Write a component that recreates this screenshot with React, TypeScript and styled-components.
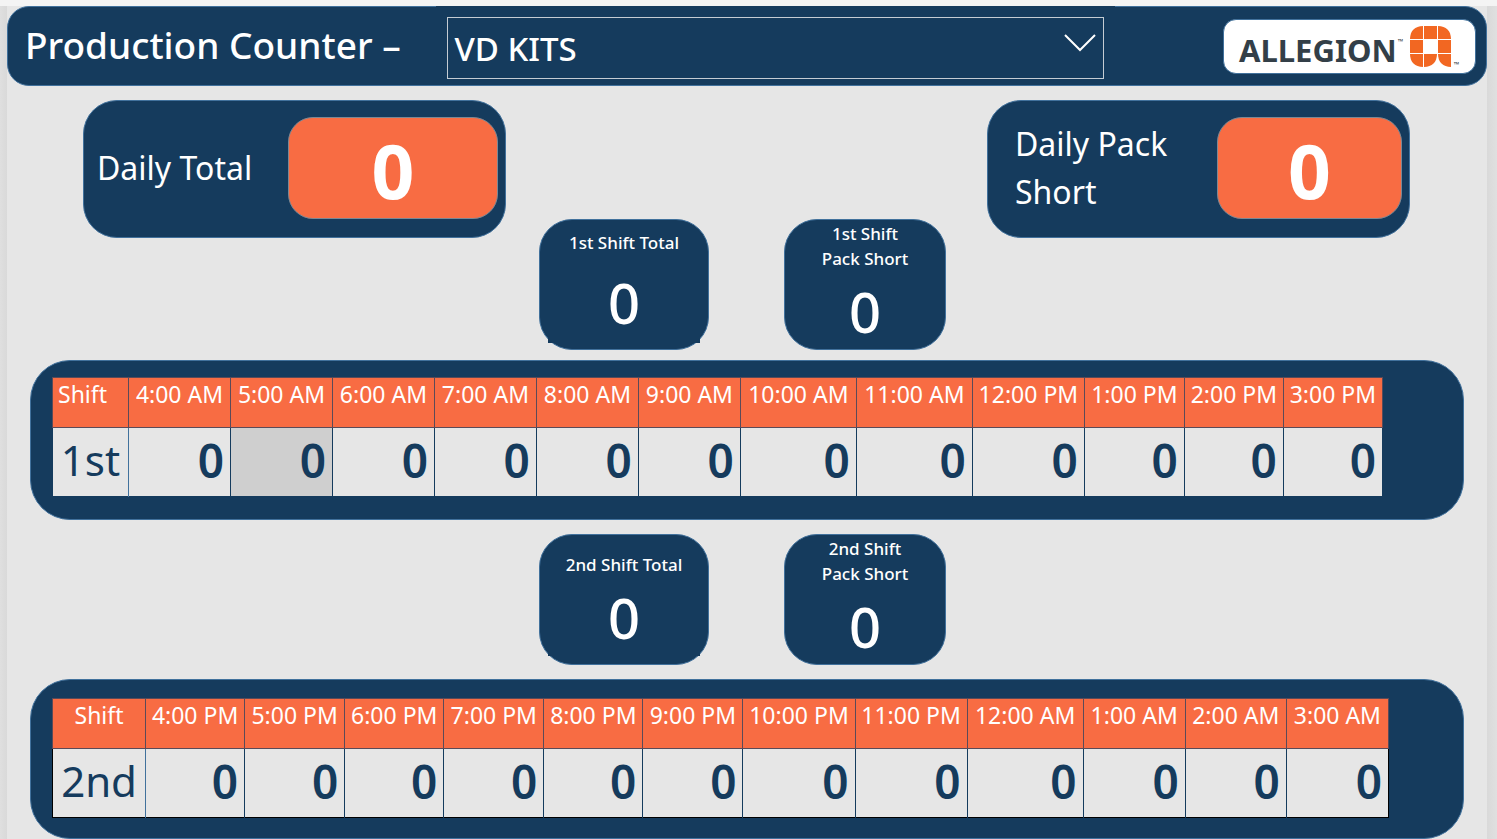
import React from "react";
import styled, { createGlobalStyle } from "styled-components";

const navy = "#153b5d";
const edge = "#41719c";
const orange = "#f86c43";
const canvas = "#e6e6e6";

const GlobalStyle = createGlobalStyle`
  * { box-sizing: border-box; }
  body {
    margin: 0;
    background: ${canvas};
    font-family: "Noto Sans", "Open Sans", sans-serif;
    color: #fff;
  }
`;

const Page = styled.div`
  min-height: 100vh;
  border-top: 6px solid #f4f4f4;
  padding: 0 10px 0 7px;
  background: linear-gradient(to right, #dfdfdf, #d9d9d9 7px, ${canvas} 7px, ${canvas} calc(100% - 10px), #d9d9d9 calc(100% - 10px), #e0e0e0);
`;

const Header = styled.header`
  display: grid;
  grid-template-columns: 429fr 679fr 372fr;
  height: 80px;
  background: ${navy};
  border: 1px solid ${edge};
  border-radius: 22px;
`;

const Title = styled.h1`
  margin: 0;
  padding-left: 17px;
  font-size: 37px;
  font-weight: 500;
  line-height: 76px;
  white-space: nowrap;
`;

const Slicer = styled.div`
  position: relative;
  margin-top: -1px;
  padding: 11px 11px 5px;
  background: ${navy};
`;

const LineSelect = styled.select`
  display: block;
  width: 100%;
  height: 62px;
  padding: 0 6px;
  appearance: none;
  border: 1px solid #c4ccd3;
  border-radius: 0;
  background: ${navy};
  color: #fff;
  font: 500 33px "Noto Sans", sans-serif;
`;

const Chevron = styled.svg`
  position: absolute;
  top: 28px;
  right: 19px;
  pointer-events: none;
`;

const Logo = styled.div`
  justify-self: end;
  display: flex;
  width: 253px;
  height: 55px;
  margin: 12px 10px 0 0;
  padding: 6px 0 0 15px;
  background: #fff;
  border: 1px solid ${edge};
  border-radius: 13px;
  color: #333f48;
`;

const Wordmark = styled.span`
  font-size: 31px;
  font-weight: 700;
  line-height: 48px;
`;

const Trademark = styled.span<{ $low?: boolean }>`
  align-self: ${(p) => (p.$low ? "flex-end" : "flex-start")};
  width: ${(p) => (p.$low ? "8px" : "13px")};
  padding: ${(p) => (p.$low ? "0 0 4px 2px" : "12px 0 0 1px")};
  font-size: 7px;
  line-height: 8px;
`;

const Summary = styled.section<{ $tall?: boolean }>`
  display: grid;
  grid-template-columns: 76fr 423fr 33fr 170fr 75fr 162fr 41fr 423fr 77fr;
  height: ${(p) => (p.$tall ? "250px" : "131px")};
  margin-top: 14px;
`;

const DailyCard = styled.div<{ $column: number; $inset: number }>`
  grid-column: ${(p) => p.$column};
  align-self: start;
  display: flex;
  align-items: center;
  justify-content: space-between;
  height: 138px;
  padding: 0 7px 2px ${(p) => p.$inset}px;
  background: ${navy};
  border: 1px solid ${edge};
  border-radius: 34px;
  font-size: 32px;
  line-height: 48px;
`;

const DailyValue = styled.output<{ $width: number }>`
  flex: none;
  width: ${(p) => p.$width}px;
  height: 102px;
  background: ${orange};
  border: 1px solid #7c8894;
  border-radius: 25px;
  font-size: 75px;
  font-weight: 700;
  line-height: 105px;
  text-align: center;
`;

const ShiftCard = styled.div<{ $column: number }>`
  grid-column: ${(p) => p.$column};
  align-self: end;
  display: flex;
  flex-direction: column;
  align-items: center;
  justify-content: space-between;
  height: 131px;
  padding: 0 8px;
  background: ${navy};
  border: 1px solid ${edge};
  border-radius: 33px;
  text-align: center;
`;

const ShiftLabel = styled.label<{ $top: number; $narrow?: boolean }>`
  width: ${(p) => (p.$narrow ? "100px" : "auto")};
  padding-top: ${(p) => p.$top}px;
  font-size: 17px;
  font-weight: 500;
  line-height: 25px;
  white-space: ${(p) => (p.$narrow ? "normal" : "nowrap")};
`;

const ShiftValue = styled.output<{ $foot?: number }>`
  width: 100%;
  height: ${(p) => (p.$foot ? 78 - p.$foot : 72)}px;
  margin-bottom: ${(p) => p.$foot ?? 0}px;
  background: ${(p) => (p.$foot ? navy : "transparent")};
  font-size: 56px;
  font-weight: 500;
  line-height: ${(p) => (p.$foot ? "62px" : "68px")};
`;

const Panel = styled.section<{ $gap: number; $top: number; $right: number }>`
  height: 160px;
  margin: ${(p) => p.$gap}px 23px 0;
  padding: ${(p) => p.$top}px ${(p) => p.$right}px 0 21px;
  background: ${navy};
  border: 1px solid ${edge};
  border-radius: 40px;
`;

const HourTable = styled.table<{ $outline: string }>`
  width: 100%;
  table-layout: fixed;
  border-collapse: collapse;
  border: 1px solid ${(p) => p.$outline};
`;

const Col = styled.col<{ $share: number }>`
  width: ${(p) => p.$share}%;
`;

const HourHead = styled.th<{ $start?: boolean }>`
  height: 50px;
  padding: ${(p) => (p.$start ? "0 0 0 5px" : "0")};
  background: ${orange};
  border: 1px solid #5b4a58;
  font-size: 23px;
  font-weight: 400;
  line-height: 32px;
  text-align: ${(p) => (p.$start ? "left" : "center")};
  vertical-align: top;
  white-space: nowrap;
`;

const ShiftName = styled.th`
  height: 69px;
  padding: 0 0 4px;
  background: ${canvas};
  border-right: 1px solid ${edge};
  color: ${navy};
  font-size: 42px;
  font-weight: 400;
  line-height: 60px;
  text-align: center;
`;

const HourValue = styled.td<{ $selected?: boolean }>`
  height: 69px;
  padding: 0 6px 4px 0;
  background: ${(p) => (p.$selected ? "#cfcfcf" : canvas)};
  border-left: 1px solid ${navy};
  color: ${navy};
  font-size: 46px;
  font-weight: 600;
  line-height: 60px;
  text-align: right;
`;

function AllegionMark() {
  return (
    <svg width="42" height="42" viewBox="0 0 42 42" fill="#f26722" aria-hidden="true">
      <path d="M13 0V13H0C0 5 5 0 13 0Z" />
      <path d="M14 0H27V13H14Z" />
      <path d="M28 0C36 0 41 5 41 13H28Z" />
      <path d="M0 14H13V27H0Z" />
      <path d="M28 14H41V27H28Z" />
      <path d="M0 28H13V41C5 41 0 36 0 28Z" />
      <path d="M14 28H27C27 36 22 41 14 41Z" />
      <path d="M28 28H41V41C33 41 28 36 28 28Z" />
    </svg>
  );
}

type ShiftTableProps = {
  shift: string;
  hours: string[];
  widths: number[];
  outline: string;
  selected?: number;
  startLabel?: boolean;
};

function ShiftTable({ shift, hours, widths, outline, selected, startLabel }: ShiftTableProps) {
  const total = widths.reduce((sum, w) => sum + w, 0);
  return (
    <HourTable $outline={outline}>
      <colgroup>
        {widths.map((w, i) => (
          <Col key={i} $share={(w / total) * 100} />
        ))}
      </colgroup>
      <thead>
        <tr>
          <HourHead scope="col" $start={startLabel}>Shift</HourHead>
          {hours.map((hour) => (
            <HourHead scope="col" key={hour}>{hour}</HourHead>
          ))}
        </tr>
      </thead>
      <tbody>
        <tr>
          <ShiftName scope="row">{shift}</ShiftName>
          {hours.map((hour, i) => (
            <HourValue key={hour} $selected={i === selected}>0</HourValue>
          ))}
        </tr>
      </tbody>
    </HourTable>
  );
}

const firstHours = ["4:00 AM", "5:00 AM", "6:00 AM", "7:00 AM", "8:00 AM", "9:00 AM", "10:00 AM", "11:00 AM", "12:00 PM", "1:00 PM", "2:00 PM", "3:00 PM"];
const secondHours = ["4:00 PM", "5:00 PM", "6:00 PM", "7:00 PM", "8:00 PM", "9:00 PM", "10:00 PM", "11:00 PM", "12:00 AM", "1:00 AM", "2:00 AM", "3:00 AM"];

export default function App() {
  return (
    <>
      <GlobalStyle />
      <Page>
        <Header>
          <Title>Production Counter –</Title>
          <Slicer>
            <LineSelect aria-label="Production line" defaultValue="VD KITS">
              <option>VD KITS</option>
            </LineSelect>
            <Chevron width="32" height="18" viewBox="0 0 32 18" fill="none" stroke="#fff" strokeWidth="2" aria-hidden="true">
              <path d="M1 1L16 16L31 1" />
            </Chevron>
          </Slicer>
          <Logo>
            <Wordmark>ALLEGION</Wordmark>
            <Trademark>™</Trademark>
            <AllegionMark />
            <Trademark $low>™</Trademark>
          </Logo>
        </Header>

        <main>
          <Summary $tall>
            <DailyCard $column={2} $inset={13}>
              <label htmlFor="daily-total">Daily Total</label>
              <DailyValue id="daily-total" $width={210}>0</DailyValue>
            </DailyCard>
            <ShiftCard $column={4}>
              <ShiftLabel htmlFor="first-total" $top={10}>1st Shift Total</ShiftLabel>
              <ShiftValue id="first-total" $foot={6}>0</ShiftValue>
            </ShiftCard>
            <ShiftCard $column={6}>
              <ShiftLabel htmlFor="first-short" $top={1} $narrow>1st Shift Pack Short</ShiftLabel>
              <ShiftValue id="first-short">0</ShiftValue>
            </ShiftCard>
            <DailyCard $column={8} $inset={27}>
              <label htmlFor="daily-short">Daily Pack Short</label>
              <DailyValue id="daily-short" $width={185}>0</DailyValue>
            </DailyCard>
          </Summary>

          <Panel $gap={10} $top={16} $right={80}>
            <ShiftTable
              shift="1st"
              hours={firstHours}
              widths={[76, 102, 102, 102, 102, 102, 102, 116, 116, 112, 100, 99, 99]}
              outline={navy}
              selected={1}
              startLabel
            />
          </Panel>

          <Summary>
            <ShiftCard $column={4}>
              <ShiftLabel htmlFor="second-total" $top={17}>2nd Shift Total</ShiftLabel>
              <ShiftValue id="second-total" $foot={8}>0</ShiftValue>
            </ShiftCard>
            <ShiftCard $column={6}>
              <ShiftLabel htmlFor="second-short" $top={1} $narrow>2nd Shift Pack Short</ShiftLabel>
              <ShiftValue id="second-short">0</ShiftValue>
            </ShiftCard>
          </Summary>

          <Panel $gap={14} $top={18} $right={74}>
            <ShiftTable
              shift="2nd"
              hours={secondHours}
              widths={[93, 99, 100, 99, 100, 99, 100, 112, 112, 116, 102, 101, 102]}
              outline="#000"
            />
          </Panel>
        </main>
      </Page>
    </>
  );
}
